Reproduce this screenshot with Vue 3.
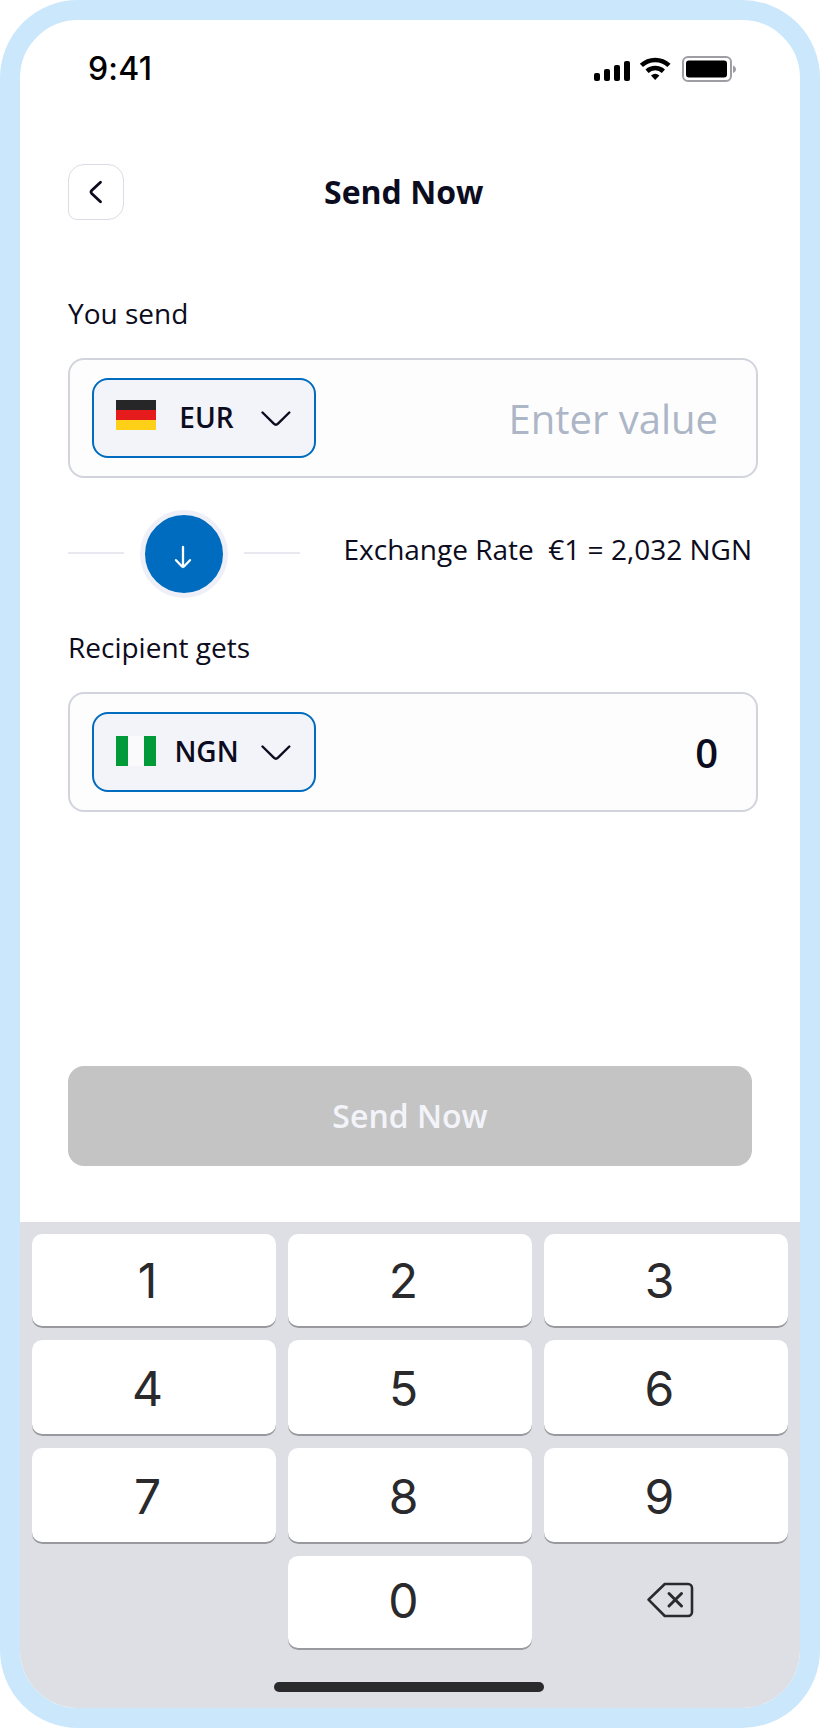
<script setup>
import { ref } from 'vue'

const rows = [
  ['1', '2', '3'],
  ['4', '5', '6'],
  ['7', '8', '9'],
]
const amount = ref('')
</script>

<template>
  <main class="phone">
    <header class="status">
      <span class="time">9:41</span>
      <svg class="status-icons" width="144" height="28" viewBox="0 0 144 28">
        <g fill="#000">
          <rect x="0" y="18" width="6" height="8" rx="2" />
          <rect x="10" y="14" width="6" height="12" rx="2" />
          <rect x="20" y="10" width="6" height="16" rx="2" />
          <rect x="30" y="6" width="6" height="20" rx="2" />
        </g>
        <g fill="none" stroke="#000" stroke-width="4.6">
          <path d="M47.4 10.4a20.2 20.2 0 0 1 27.6 0" />
          <path d="M53 16.2a12.2 12.2 0 0 1 16.4 0" />
        </g>
        <path d="M57 20.6a6.6 6.6 0 0 1 8.4 0l-4.2 4.4z" fill="#000" />
        <rect x="89" y="2" width="48" height="24" rx="5" fill="none" stroke="#9d9da3" stroke-width="2" />
        <rect x="92" y="5.5" width="41" height="17" rx="3" fill="#000" />
        <path d="M139 10.5c4 1.500 4 6 0 7.500z" fill="#9d9da3" />
      </svg>
    </header>

    <section class="nav">
      <button class="back" aria-label="Back">
        <svg width="56" height="56" viewBox="0 0 56 56">
          <path d="M32.500 18.200l-8.800 8.400a2 2 0 0 0 0 2.800l8.800 8.400" fill="none" stroke="#0c0c20" stroke-width="2.800" stroke-linecap="round" />
        </svg>
      </button>
      <h1 class="title"><span>Send Now</span></h1>
    </section>

    <section class="form">
      <label class="label send-label"><span>You send</span></label>
      <div class="field">
        <button class="currency">
          <svg class="flag flag-de" width="40" height="30">
            <rect width="40" height="10" fill="#262628" />
            <rect y="10" width="40" height="10" fill="#e51b1c" />
            <rect y="20" width="40" height="10" fill="#fed018" />
          </svg>
          <span class="code eur">EUR</span>
          <svg class="chevron" width="30" height="18" viewBox="0 0 30 18">
            <path d="M1.500 2.500l11.300 11.200a3 3 0 0 0 4.200 0l11.300-11.200" fill="none" stroke="#0c0c20" stroke-width="2.400" stroke-linecap="round" />
          </svg>
        </button>
        <span class="placeholder">{{ amount || 'Enter value' }}</span>
      </div>

      <div class="exchange">
        <i class="rule"></i>
        <div class="swap">
          <svg width="78" height="78" viewBox="0 0 78 78">
            <path d="M38 32v20M31 45.200l5.800 6q1.200 1.200 2.400 0l5.800-6" fill="none" stroke="#fff" stroke-width="2.300" stroke-linecap="round" />
          </svg>
        </div>
        <i class="rule"></i>
        <p class="rate">Exchange Rate&nbsp; €1 = 2,032 NGN</p>
      </div>

      <label class="label gets-label"><span>Recipient gets</span></label>
      <div class="field">
        <button class="currency">
          <svg class="flag flag-ng" width="40" height="30">
            <rect width="40" height="30" fill="#fafafd" />
            <rect width="12" height="30" fill="#009a38" />
            <rect x="28" width="12" height="30" fill="#009a38" />
          </svg>
          <span class="code ngn">NGN</span>
          <svg class="chevron" width="30" height="18" viewBox="0 0 30 18">
            <path d="M1.500 2.500l11.300 11.200a3 3 0 0 0 4.200 0l11.300-11.200" fill="none" stroke="#0c0c20" stroke-width="2.400" stroke-linecap="round" />
          </svg>
        </button>
        <span class="result">0</span>
      </div>

      <button class="submit">Send Now</button>
    </section>

    <section class="keyboard">
      <div class="keys">
        <template v-for="(row, index) in rows" :key="row[0]">
          <button v-for="digit in row" :key="digit" class="key" :class="{ first: index === 0 }"><span>{{ digit }}</span></button>
        </template>
        <span></span>
        <button class="key zero"><span>0</span></button>
        <button class="delete" aria-label="Delete">
          <svg width="48" height="36" viewBox="0 0 48 36">
            <g fill="none" stroke="#2a2a2d" stroke-linejoin="round" stroke-linecap="round">
              <path d="M2.500 17.700L18.800 2h23.200a4 4 0 0 1 4 4v24a4 4 0 0 1-4 4H18.800z" stroke-width="2.600" />
              <path d="M23 11.500l12.500 12.500M35.500 11.500L23 24" stroke-width="3" />
            </g>
          </svg>
        </button>
      </div>
      <div class="home"></div>
    </section>
  </main>
</template>

<style>
body {
  background: #fff;
}
</style>

<style scoped>
* {
  box-sizing: border-box;
}
button {
  padding: 0;
  border: 0;
  background: none;
  font: inherit;
  color: inherit;
}
.phone {
  display: flex;
  flex-direction: column;
  width: 820px;
  height: 1728px;
  border: 20px solid #cae7fc;
  border-radius: 78px;
  background: #fff;
  overflow: hidden;
  color: #0c0c20;
  font-family: "Open Sans", "Noto Sans", sans-serif;
  font-size: 28px;
}
.status {
  display: flex;
  justify-content: space-between;
  height: 144px;
  padding: 29px 62px 0 68px;
}
.time {
  font: 500 32px/40px Inter, sans-serif;
  letter-spacing: 0.2px;
  color: #000;
}
.status-icons {
  margin-top: 6px;
}
.nav {
  display: flex;
  height: 56px;
  padding-left: 48px;
}
.back {
  width: 56px;
  height: 56px;
  border: 1px solid #dcdce6;
  border-radius: 16px 16px 16px 9px;
}
.back svg {
  display: block;
  margin: -1px;
}
.title {
  margin: 6px 0 0 200px;
  font-size: 32px;
  font-weight: 700;
  line-height: 44px;
}
.form {
  display: flex;
  flex-direction: column;
  height: 1002px;
  padding: 73px 42px 0 48px;
}
.label {
  display: block;
  height: 40px;
  line-height: 40px;
}
.send-label {
  margin-bottom: 25px;
}
.field {
  display: flex;
  align-items: center;
  justify-content: space-between;
  width: 690px;
  height: 120px;
  padding: 0 38px 0 22px;
  border: 2px solid #d1d5db;
  border-radius: 16px;
  background: #fdfdfe;
}
.currency {
  display: flex;
  align-items: center;
  width: 224px;
  height: 80px;
  padding: 0 23px 0 22px;
  border: 2px solid #006cbf;
  border-radius: 16px;
  background: #f3f4fa;
}
.flag-de {
  margin-top: -6px;
}
.flag-ng {
  margin-top: -2px;
}
.chevron {
  margin-top: 2px;
}
.code {
  flex: 1;
  padding: 0 4px 2px 0;
  font-weight: 600;
  text-align: center;
}
.placeholder,
.result {
  padding-top: 2px;
  font-size: 40px;
  line-height: 56px;
}
.placeholder {
  color: #acb6c6;
}
.result {
  font-weight: 600;
}
.exchange {
  display: flex;
  align-items: center;
  height: 149px;
}
.rule {
  width: 56px;
  height: 2px;
  background: #e8e9f0;
}
.swap {
  width: 88px;
  height: 88px;
  margin: 2px 16px 0;
  border: 5px solid #eff0f7;
  border-radius: 50%;
  background: #006cbf;
}
.swap svg {
  display: block;
}
.rate {
  margin: 0 0 7px 43.5px;
  line-height: 40px;
  white-space: nowrap;
}
.gets-label {
  margin-bottom: 25px;
}
.submit {
  width: 684px;
  height: 100px;
  padding-bottom: 1px;
  margin-top: 254px;
  border-radius: 16px;
  background: #c4c4c4;
  color: #f3f4fa;
  font-size: 32px;
  font-weight: 600;
}
.keyboard {
  flex: 1;
  padding: 12px;
  background: #dedfe4;
}
.keys {
  display: grid;
  grid-template-columns: repeat(3, 244px);
  grid-template-rows: 94px 96px 96px 94px;
  gap: 12px;
}
.key {
  padding: 1px 13px 0 0;
  border-radius: 10px;
  background: #fff;
  box-shadow: inset 0 -2px 0 #999a9f;
  color: #2a2a2d;
  font: 400 48px/60px Inter, sans-serif;
}
.first {
  padding: 0 13px 1px 0;
}
.zero {
  padding: 0 13px 4px 0;
}
.delete {
  display: flex;
  align-items: center;
  justify-content: center;
  padding: 0 0 6px 8px;
}
.home {
  width: 270px;
  height: 10px;
  margin: 32px 0 0 242px;
  border-radius: 5px;
  background: #2a2a2d;
}
</style>
